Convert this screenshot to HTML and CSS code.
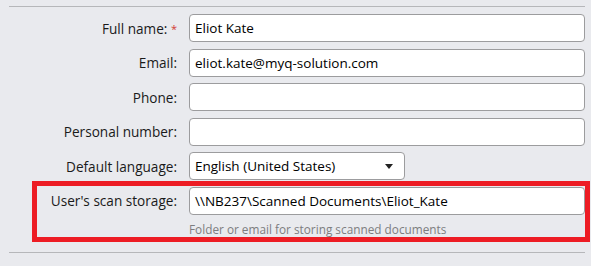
FILE: index.html
```html
<!DOCTYPE html>
<html>
<head>
    <title>User properties</title>
    <link rel="stylesheet" href="styles.css">
</head>
<body>
    <div class="panel">
        <div class="rule"></div>

        <div class="form">
            <div class="row">
                <label class="label">Full name: <span class="req">*</span></label>
                <div class="field">Eliot Kate</div>
            </div>
            <div class="row">
                <label class="label">Email:</label>
                <div class="field">eliot.kate@myq-solution.com</div>
            </div>
            <div class="row">
                <label class="label">Phone:</label>
                <div class="field"></div>
            </div>
            <div class="row">
                <label class="label">Personal number:</label>
                <div class="field"></div>
            </div>
            <div class="row">
                <label class="label">Default language:</label>
                <div class="field select">
                    <span>English (United States)</span>
                    <span class="caret"></span>
                </div>
            </div>

            <div class="highlight">
                <div class="row">
                    <label class="label">User's scan storage:</label>
                    <div class="field">\\NB237\Scanned Documents\Eliot_Kate</div>
                </div>
                <div class="hint">Folder or email for storing scanned documents</div>
            </div>
        </div>

        <div class="rule rule-bottom"></div>
    </div>
</body>
</html>
```

FILE: styles.css
```css
body {
    margin: 0;
    background: #e9eaee;
    font-family: "Open Sans", "Noto Sans", sans-serif;
    font-size: 13.6px;
    color: #1a1a1a;
}

.panel {
    width: 576px;
    padding: 6px 6px 0 9px;
}

.rule {
    height: 1px;
    background: #b6b7ba;
}

.rule-bottom {
    margin-top: 10px;
}

.form {
    display: flex;
    flex-direction: column;
    gap: 6.6px;
    padding-top: 7px;
}

.row {
    display: grid;
    grid-template-columns: 168px 396px;
    column-gap: 12px;
    align-items: center;
}

.label {
    text-align: right;
    white-space: nowrap;
}

.req {
    color: #d23a34;
    font-size: 11px;
    vertical-align: 1px;
}

.field {
    box-sizing: border-box;
    height: 28px;
    line-height: 26px;
    padding: 0 5px;
    background: #fff;
    border: 1px solid #9c9c9e;
    border-radius: 4px;
    color: #000;
    font-size: 13.5px;
    white-space: nowrap;
    overflow: hidden;
}

.select {
    width: 216px;
    display: flex;
    justify-content: space-between;
    align-items: center;
}

.caret {
    width: 0;
    height: 0;
    margin-right: 6px;
    border-left: 4px solid transparent;
    border-right: 4px solid transparent;
    border-top: 5px solid #222;
}

.highlight {
    margin: -6px -5px 0 23px;
    padding: 1px 0 0;
    border: 5px solid #ed1c24;
}

.highlight .row {
    grid-template-columns: 140px 396px;
}

.hint {
    margin: 6px 0 0 152px;
    line-height: 16px;
    font-size: 11.8px;
    color: #7d7d7f;
}
```
